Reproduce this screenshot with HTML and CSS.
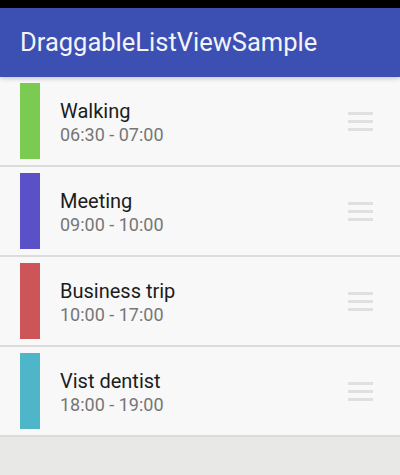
FILE: index.html
```html
<!DOCTYPE html>
<html>
<head>
<meta charset="utf-8">
<link rel="stylesheet" href="styles.css">
</head>
<body>
<div class="status"></div>
<header class="appbar">DraggableListViewSample</header>
<ul class="list">
  <li class="row">
    <span class="swatch green"></span>
    <div class="text"><div class="title">Walking</div><div class="time">06:30 - 07:00</div></div>
    <span class="handle"><i></i><i></i><i></i></span>
  </li>
  <li class="row">
    <span class="swatch purple"></span>
    <div class="text"><div class="title">Meeting</div><div class="time">09:00 - 10:00</div></div>
    <span class="handle"><i></i><i></i><i></i></span>
  </li>
  <li class="row">
    <span class="swatch red"></span>
    <div class="text"><div class="title">Business trip</div><div class="time">10:00 - 17:00</div></div>
    <span class="handle"><i></i><i></i><i></i></span>
  </li>
  <li class="row">
    <span class="swatch cyan"></span>
    <div class="text"><div class="title">Vist dentist</div><div class="time">18:00 - 19:00</div></div>
    <span class="handle"><i></i><i></i><i></i></span>
  </li>
</ul>
</body>
</html>
```

FILE: styles.css
```css
html, body {
  margin: 0;
  padding: 0;
  height: 100%;
}
body {
  background: #e8e9e7;
  font-family: Roboto, "Noto Sans", sans-serif;
  overflow: hidden;
}
.status {
  height: 8px;
  background: #000;
}
.appbar {
  height: 69px;
  background: #3b50b2;
  color: #f4f4f8;
  font-size: 25.5px;
  display: flex;
  align-items: center;
  padding-left: 20px;
  box-sizing: border-box;
  padding-bottom: 2px;
  position: relative;
  z-index: 1;
  box-shadow: 0 2px 4px rgba(0,0,0,0.18);
}
.list {
  list-style: none;
  margin: 0;
  padding: 0;
}
.row {
  height: 88px;
  background: #f8f8f8;
  border-bottom: 2px solid #dcdcdc;
  display: flex;
  align-items: center;
  padding-left: 20px;
}
.swatch {
  width: 20px;
  height: 76px;
  flex: none;
}
.green { background: #7bcb52; }
.purple { background: #5a51c9; }
.red { background: #cd5558; }
.cyan { background: #4fb5c9; }
.text {
  margin-left: 20px;
  flex: 1;
  padding-top: 2px;
}
.title {
  font-size: 20px;
  color: #1c1c1c;
  line-height: 25px;
}
.time {
  font-size: 18px;
  color: #767676;
  line-height: 22px;
}
.handle {
  width: 25px;
  margin-right: 27px;
  display: flex;
  flex-direction: column;
  gap: 5px;
}
.handle i {
  display: block;
  height: 3px;
  background: #e0e0e0;
}
```
